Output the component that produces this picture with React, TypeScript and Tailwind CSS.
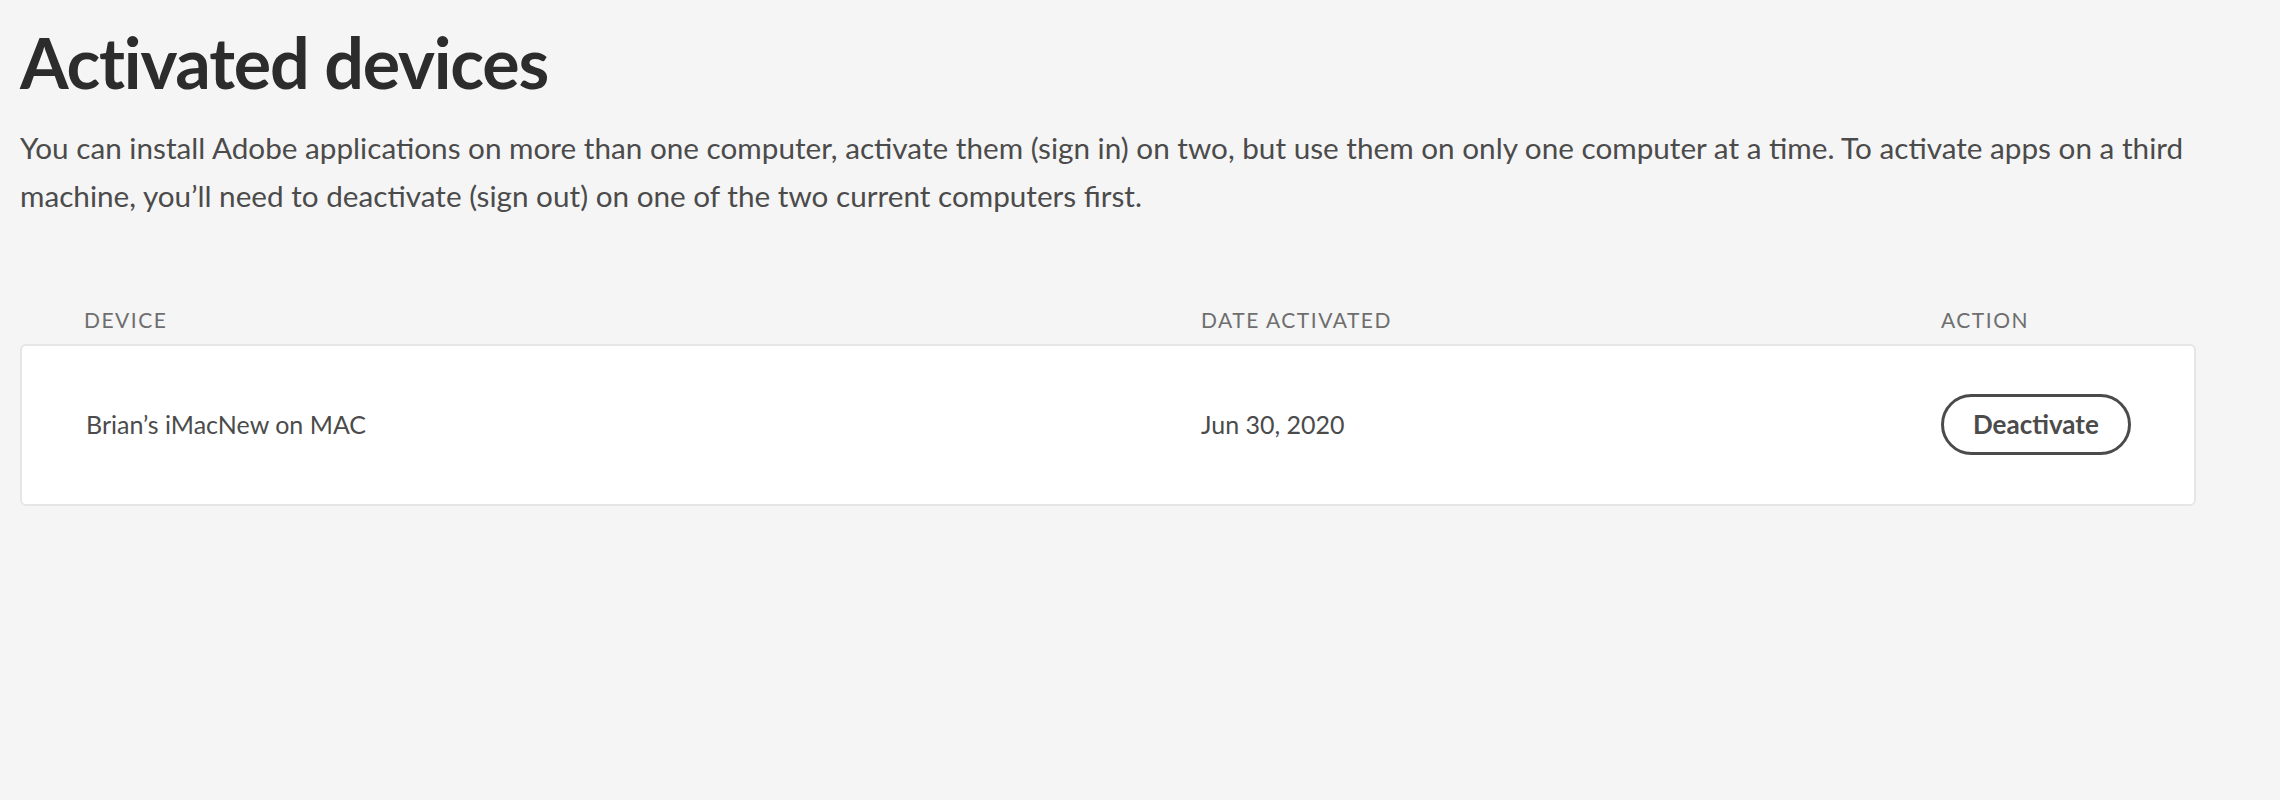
export default function App() {
  const devices = [
    { name: "Brian’s iMacNew on MAC", date: "Jun 30, 2020" },
  ];

  return (
    <div className="min-h-[800px] bg-[#f5f5f5] px-[20px] pt-[20px] font-['Lato',sans-serif] text-[#4b4b4b]">
      {/* Heading */}
      <h1 className="text-[70px] font-bold leading-[84px] tracking-[-1.2px] text-[#2c2c2c]">
        Activated devices
      </h1>
      <p className="mt-[20px] text-[29.7px] leading-[48px] text-[#4b4b4b]">
        You can install Adobe applications on more than one computer, activate
        them (sign in) on two, but use them on only one computer at a time. To
        activate apps on a third machine, you’ll need to deactivate (sign out)
        on one of the two current computers first.
      </p>

      {/* Devices table */}
      <div className="mt-[84px] w-[2176px]">
        <div className="grid grid-cols-[1117px_740px_1fr] pb-[8px] pl-[64px] text-[21px] uppercase tracking-[1.5px] text-[#6e6e6e]">
          <span>Device</span>
          <span>Date Activated</span>
          <span>Action</span>
        </div>
        <div className="rounded-[6px] border-2 border-[#e6e6e6] bg-white">
          {devices.map((d, i) => (
            <div
              key={i}
              className="grid h-[158px] grid-cols-[1115px_740px_1fr] items-center pl-[64px] text-[25px] text-[#4b4b4b]"
            >
              <span>{d.name}</span>
              <span>{d.date}</span>
              <div>
                <button className="h-[61px] rounded-full border-[3.5px] border-[#4b4b4b] px-[29px] text-[26px] font-bold text-[#4b4b4b]">
                  Deactivate
                </button>
              </div>
            </div>
          ))}
        </div>
      </div>
    </div>
  );
}
